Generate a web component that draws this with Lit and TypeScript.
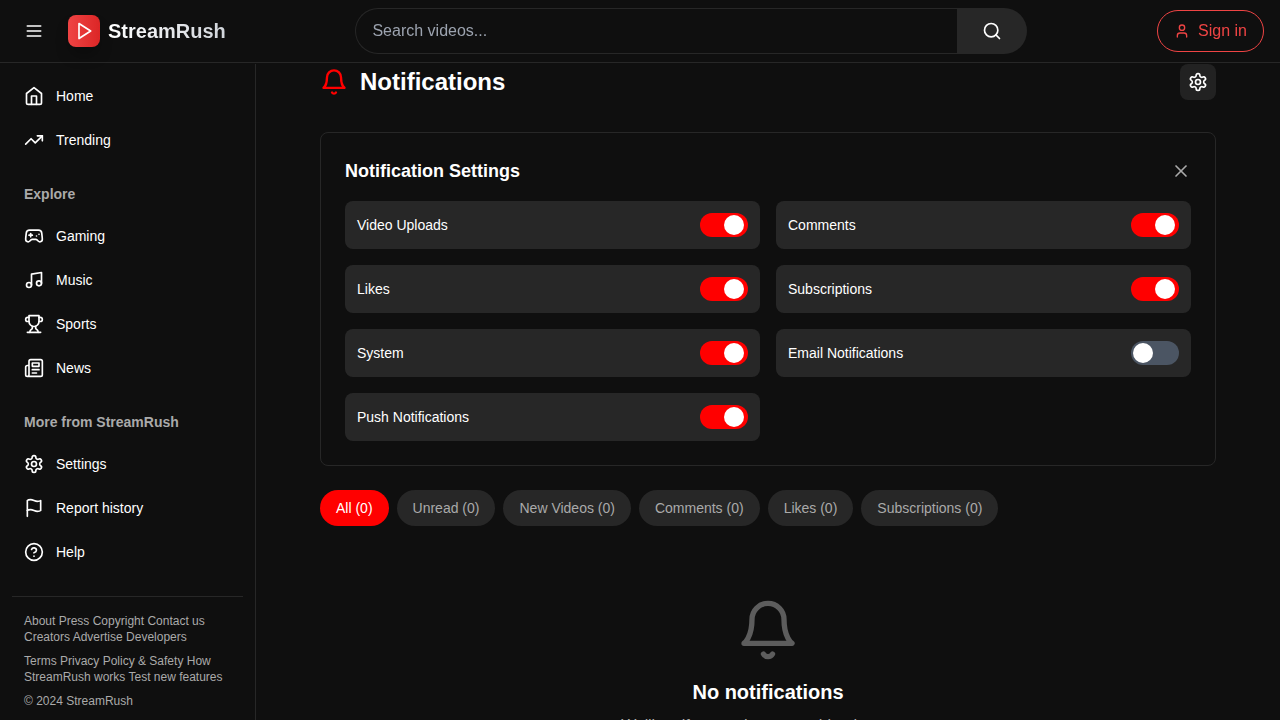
import { LitElement, html, svg, css, nothing } from "lit";
import { customElement, property, state } from "lit/decorators.js";
import { classMap } from "lit/directives/class-map.js";

const ICONS = {
  menu: svg`<path d="M4 6h16"/><path d="M4 12h16"/><path d="M4 18h16"/>`,
  play: svg`<polygon points="6 3 20 12 6 21 6 3"/>`,
  search: svg`<circle cx="11" cy="11" r="8"/><path d="m21 21-4.3-4.3"/>`,
  user: svg`<path d="M19 21v-2a4 4 0 0 0-4-4H9a4 4 0 0 0-4 4v2"/><circle cx="12" cy="7" r="4"/>`,
  home: svg`<path d="m3 9 9-7 9 7v11a2 2 0 0 1-2 2H5a2 2 0 0 1-2-2z"/><polyline points="9 22 9 12 15 12 15 22"/>`,
  trending: svg`<polyline points="22 7 13.5 15.5 8.5 10.5 2 17"/><polyline points="16 7 22 7 22 13"/>`,
  gaming: svg`<line x1="6" x2="10" y1="11" y2="11"/><line x1="8" x2="8" y1="9" y2="13"/><line x1="15" x2="15.01" y1="12" y2="12"/><line x1="18" x2="18.01" y1="10" y2="10"/><path d="M17.32 5H6.68a4 4 0 0 0-3.978 3.59c-.006.052-.01.101-.017.152C2.604 9.416 2 14.456 2 16a3 3 0 0 0 3 3c1 0 1.5-.5 2-1l1.414-1.414A2 2 0 0 1 9.828 16h4.344a2 2 0 0 1 1.414.586L17 18c.5.5 1 1 2 1a3 3 0 0 0 3-3c0-1.545-.604-6.584-.685-7.258-.007-.05-.011-.1-.017-.151A4 4 0 0 0 17.32 5z"/>`,
  music: svg`<path d="M9 18V5l12-2v13"/><circle cx="6" cy="18" r="3"/><circle cx="18" cy="16" r="3"/>`,
  trophy: svg`<path d="M6 9H4.5a2.5 2.5 0 0 1 0-5H6"/><path d="M18 9h1.5a2.5 2.5 0 0 0 0-5H18"/><path d="M4 22h16"/><path d="M10 14.66V17c0 .55-.47.98-.97 1.21C7.85 18.75 7 20.24 7 22"/><path d="M14 14.66V17c0 .55.47.98.97 1.21C16.15 18.75 17 20.24 17 22"/><path d="M18 2H6v7a6 6 0 0 0 12 0V2Z"/>`,
  news: svg`<path d="M4 22h16a2 2 0 0 0 2-2V4a2 2 0 0 0-2-2H8a2 2 0 0 0-2 2v16a2 2 0 0 1-2 2Zm0 0a2 2 0 0 1-2-2v-9c0-1.1.9-2 2-2h2"/><path d="M18 14h-8"/><path d="M15 18h-5"/><path d="M10 6h8v4h-8V6Z"/>`,
  settings: svg`<path d="M12.22 2h-.44a2 2 0 0 0-2 2v.18a2 2 0 0 1-1 1.73l-.43.25a2 2 0 0 1-2 0l-.15-.08a2 2 0 0 0-2.73.73l-.22.38a2 2 0 0 0 .73 2.73l.15.1a2 2 0 0 1 1 1.72v.51a2 2 0 0 1-1 1.74l-.15.09a2 2 0 0 0-.73 2.73l.22.38a2 2 0 0 0 2.73.73l.15-.08a2 2 0 0 1 2 0l.43.25a2 2 0 0 1 1 1.73V20a2 2 0 0 0 2 2h.44a2 2 0 0 0 2-2v-.18a2 2 0 0 1 1-1.73l.43-.25a2 2 0 0 1 2 0l.15.08a2 2 0 0 0 2.73-.73l.22-.39a2 2 0 0 0-.73-2.73l-.15-.08a2 2 0 0 1-1-1.74v-.5a2 2 0 0 1 1-1.74l.15-.09a2 2 0 0 0 .73-2.73l-.22-.38a2 2 0 0 0-2.73-.73l-.15.08a2 2 0 0 1-2 0l-.43-.25a2 2 0 0 1-1-1.73V4a2 2 0 0 0-2-2z"/><circle cx="12" cy="12" r="3"/>`,
  flag: svg`<path d="M4 15s1-1 4-1 5 2 8 2 4-1 4-1V3s-1 1-4 1-5-2-8-2-4 1-4 1z"/><line x1="4" x2="4" y1="22" y2="15"/>`,
  help: svg`<circle cx="12" cy="12" r="10"/><path d="M9.09 9a3 3 0 0 1 5.83 1c0 2-3 3-3 3"/><path d="M12 17h.01"/>`,
  bell: svg`<path d="M6 8a6 6 0 0 1 12 0c0 7 3 9 3 9H3s3-2 3-9"/><path d="M10.3 21a1.94 1.94 0 0 0 3.4 0"/>`,
  close: svg`<path d="M18 6 6 18"/><path d="m6 6 12 12"/>`,
};
type IconName = keyof typeof ICONS;

@customElement("ui-icon")
class UiIcon extends LitElement {
  @property() name: IconName = "menu";
  @property({ type: Number }) size = 20;

  static styles = css`
    :host { display: block; flex: none; }
    svg {
      display: block;
      fill: none;
      stroke: currentColor;
      stroke-width: 2;
      stroke-linecap: round;
      stroke-linejoin: round;
    }
  `;

  render() {
    return html`<svg width=${this.size} height=${this.size} viewBox="0 0 24 24" aria-hidden="true">${ICONS[this.name]}</svg>`;
  }
}

const reset = css`
  *, *::before { box-sizing: border-box; }
  h1, h2, h3, p, ul { margin: 0; padding: 0; }
  ul { list-style: none; }
  a { color: inherit; text-decoration: none; }
  button, input { font: inherit; color: inherit; margin: 0; }
  button { padding: 0; border: 0; background: none; cursor: pointer; }
`;

@customElement("top-bar")
class TopBar extends LitElement {
  static styles = [reset, css`
    :host { display: block; }
    .bar {
      display: flex;
      align-items: center;
      justify-content: space-between;
      padding: 8px 16px;
      border-bottom: 1px solid #272727;
      background: #0f0f0f;
      will-change: transform;
    }
    .start { display: flex; align-items: center; gap: 16px; }
    .menu { padding: 8px; color: #fff; border-radius: 50%; }
    .brand { display: flex; align-items: center; gap: 8px; }
    .mark {
      display: grid;
      place-items: center;
      width: 32px;
      height: 32px;
      border-radius: 8px;
      color: #fff;
      background: linear-gradient(to right, #ef4444, #dc2626);
      box-shadow: 0 10px 15px -3px rgb(0 0 0 / 0.3);
    }
    .name {
      font-size: 20px;
      line-height: 28px;
      font-weight: 700;
      color: transparent;
      background: linear-gradient(to right, #fff, #d1d5db);
      background-clip: text;
      -webkit-background-clip: text;
    }
    .search { flex: 0 1 672px; display: flex; min-width: 0; }
    .field {
      flex: 1;
      min-width: 0;
      height: 46px;
      padding: 0 16px;
      border: 1px solid #272727;
      border-right: 0;
      border-radius: 23px 0 0 23px;
      background: #0f0f0f;
      color: #fff;
      font-size: 16px;
      outline: none;
    }
    .field::placeholder { color: #9ca3af; }
    .go {
      display: grid;
      place-items: center;
      width: 70px;
      border-radius: 0 23px 23px 0;
      background: #272727;
      color: #fff;
    }
    .sign-in {
      display: flex;
      align-items: center;
      gap: 8px;
      padding: 8px 16px;
      border: 1px solid #ef4444;
      border-radius: 21px;
      color: #ef4444;
      font-size: 16px;
      line-height: 24px;
      white-space: nowrap;
    }
  `];

  render() {
    return html`
      <header class="bar">
        <div class="start">
          <button class="menu" aria-label="Menu"><ui-icon name="menu"></ui-icon></button>
          <a class="brand" href="#">
            <span class="mark"><ui-icon name="play"></ui-icon></span>
            <span class="name">StreamRush</span>
          </a>
        </div>
        <form class="search" role="search" @submit=${(e: Event) => e.preventDefault()}>
          <input class="field" type="text" placeholder="Search videos..." aria-label="Search videos">
          <button class="go" aria-label="Search"><ui-icon name="search"></ui-icon></button>
        </form>
        <button class="sign-in"><ui-icon name="user" size="16"></ui-icon>Sign in</button>
      </header>
    `;
  }
}

interface NavGroup { title?: string; items: { label: string; icon: IconName }[] }

const NAV: NavGroup[] = [
  { items: [{ label: "Home", icon: "home" }, { label: "Trending", icon: "trending" }] },
  {
    title: "Explore",
    items: [
      { label: "Gaming", icon: "gaming" },
      { label: "Music", icon: "music" },
      { label: "Sports", icon: "trophy" },
      { label: "News", icon: "news" },
    ],
  },
  {
    title: "More from StreamRush",
    items: [
      { label: "Settings", icon: "settings" },
      { label: "Report history", icon: "flag" },
      { label: "Help", icon: "help" },
    ],
  },
];

@customElement("side-nav")
class SideNav extends LitElement {
  static styles = [reset, css`
    :host {
      display: block;
      box-sizing: border-box;
      padding: 12px;
      border-right: 1px solid #272727;
      overflow-y: auto;
      scrollbar-width: none;
      font-size: 14px;
      line-height: 20px;
    }
    .groups { display: grid; gap: 24px; }
    .title { padding: 0 12px; margin-bottom: 12px; font-size: 14px; font-weight: 700; color: #aaa; }
    .list { display: grid; gap: 4px; }
    .link { display: flex; align-items: center; gap: 12px; padding: 10px 12px; border-radius: 8px; color: #fff; }
    .link:hover { background: #272727; }
    .legal {
      display: grid;
      gap: 8px;
      margin-top: 24px;
      padding: 16px 12px 0;
      border-top: 1px solid #272727;
      color: #aaa;
      font-size: 12px;
      line-height: 16px;
    }
  `];

  render() {
    return html`
      <nav class="groups">
        ${NAV.map((group) => html`
          <section>
            ${group.title ? html`<h3 class="title">${group.title}</h3>` : nothing}
            <ul class="list">
              ${group.items.map((item) => html`
                <li><a class="link" href="#"><ui-icon name=${item.icon}></ui-icon><span>${item.label}</span></a></li>
              `)}
            </ul>
          </section>
        `)}
      </nav>
      <footer class="legal">
        <p>About Press Copyright Contact us Creators Advertise Developers</p>
        <p>Terms Privacy Policy &amp; Safety How StreamRush works Test new features</p>
        <p>© 2024 StreamRush</p>
      </footer>
    `;
  }
}

@customElement("notifications-page")
class NotificationsPage extends LitElement {
  @state() private open = true;
  @state() private filter = "All";
  @state() private prefs = [
    { label: "Video Uploads", on: true },
    { label: "Comments", on: true },
    { label: "Likes", on: true },
    { label: "Subscriptions", on: true },
    { label: "System", on: true },
    { label: "Email Notifications", on: false },
    { label: "Push Notifications", on: true },
  ];
  private filters = ["All", "Unread", "New Videos", "Comments", "Likes", "Subscriptions"];

  static styles = [reset, css`
    :host { display: block; max-width: 896px; margin: 0 auto; }
    .head, .panel-head { display: flex; align-items: center; justify-content: space-between; }
    .head { margin-bottom: 32px; }
    .heading { display: flex; align-items: center; gap: 12px; }
    .bell { color: #f00; }
    .page-title { font-size: 24px; line-height: 32px; }
    .gear { padding: 8px; border-radius: 8px; background: #222; color: #fff; }
    .panel { margin-bottom: 24px; padding: 24px; border: 1px solid #272727; border-radius: 8px; }
    .panel-head { margin-bottom: 16px; }
    .panel-title { font-size: 18px; line-height: 28px; }
    .close { color: #aaa; }
    .prefs { display: grid; grid-template-columns: repeat(2, minmax(0, 1fr)); gap: 16px; }
    .pref {
      display: flex;
      align-items: center;
      justify-content: space-between;
      padding: 12px;
      border-radius: 8px;
      background: #272727;
      cursor: pointer;
    }
    .switch {
      appearance: none;
      flex: none;
      display: flex;
      align-items: center;
      width: 48px;
      height: 24px;
      padding: 0 2px;
      border-radius: 12px;
      background: #4b5563;
      cursor: pointer;
    }
    .switch::before {
      content: "";
      width: 20px;
      height: 20px;
      border-radius: 50%;
      background: #fff;
    }
    .switch:checked { justify-content: flex-end; padding-right: 4px; background: #f00; }
    .filters { display: flex; flex-wrap: wrap; gap: 8px; }
    .filter { padding: 8px 16px; border-radius: 18px; background: #272727; color: #aaa; line-height: 20px; }
    .filter.active { background: #f00; color: #fff; }
    .empty { display: flex; flex-direction: column; align-items: center; padding: 72px 0 48px; text-align: center; }
    .empty-icon { color: #aaa; opacity: 0.5; margin-bottom: 16px; }
    .empty-title { margin-bottom: 8px; font-size: 20px; line-height: 28px; }
    .empty-text { color: #aaa; font-size: 16px; line-height: 24px; }
    @media (max-width: 767px) {
      .prefs { grid-template-columns: 1fr; }
    }
  `];

  private toggle(index: number) {
    this.prefs = this.prefs.map((p, i) => (i === index ? { ...p, on: !p.on } : p));
  }

  private renderPanel() {
    return html`
      <section class="panel">
        <div class="panel-head">
          <h2 class="panel-title">Notification Settings</h2>
          <button class="close" aria-label="Close settings" @click=${() => (this.open = false)}>
            <ui-icon name="close"></ui-icon>
          </button>
        </div>
        <div class="prefs">
          ${this.prefs.map((pref, i) => html`
            <label class="pref">
              <span>${pref.label}</span>
              <input class="switch" type="checkbox" .checked=${pref.on} @change=${() => this.toggle(i)}>
            </label>
          `)}
        </div>
      </section>
    `;
  }

  render() {
    return html`
      <div class="head">
        <div class="heading">
          <ui-icon class="bell" name="bell" size="28"></ui-icon>
          <h1 class="page-title">Notifications</h1>
        </div>
        <button class="gear" aria-label="Notification settings" @click=${() => (this.open = !this.open)}>
          <ui-icon name="settings"></ui-icon>
        </button>
      </div>
      ${this.open ? this.renderPanel() : nothing}
      <div class="filters">
        ${this.filters.map((name) => html`
          <button
            class=${classMap({ filter: true, active: name === this.filter })}
            @click=${() => (this.filter = name)}
          >${name} (0)</button>
        `)}
      </div>
      <section class="empty">
        <ui-icon class="empty-icon" name="bell" size="64"></ui-icon>
        <h2 class="empty-title">No notifications</h2>
        <p class="empty-text">We'll notify you when something happens</p>
      </section>
    `;
  }
}

@customElement("app-root")
class AppRoot extends LitElement {
  static styles = css`
    :host {
      display: grid;
      grid-template: auto minmax(0, 1fr) / 256px minmax(0, 1fr);
      row-gap: 1px;
      height: 100vh;
      background: #0f0f0f;
      color: #fff;
      font-family: "Liberation Sans", Arial, sans-serif;
      font-size: 14px;
      line-height: 20px;
    }
    .top { grid-column: 1 / -1; }
    .content { padding: 0 24px; overflow-y: auto; scrollbar-width: none; }
    @media (max-width: 767px) {
      :host { grid-template-columns: minmax(0, 1fr); }
      .side { display: none; }
    }
  `;

  render() {
    return html`
      <top-bar class="top"></top-bar>
      <side-nav class="side"></side-nav>
      <main class="content"><notifications-page></notifications-page></main>
    `;
  }
}
